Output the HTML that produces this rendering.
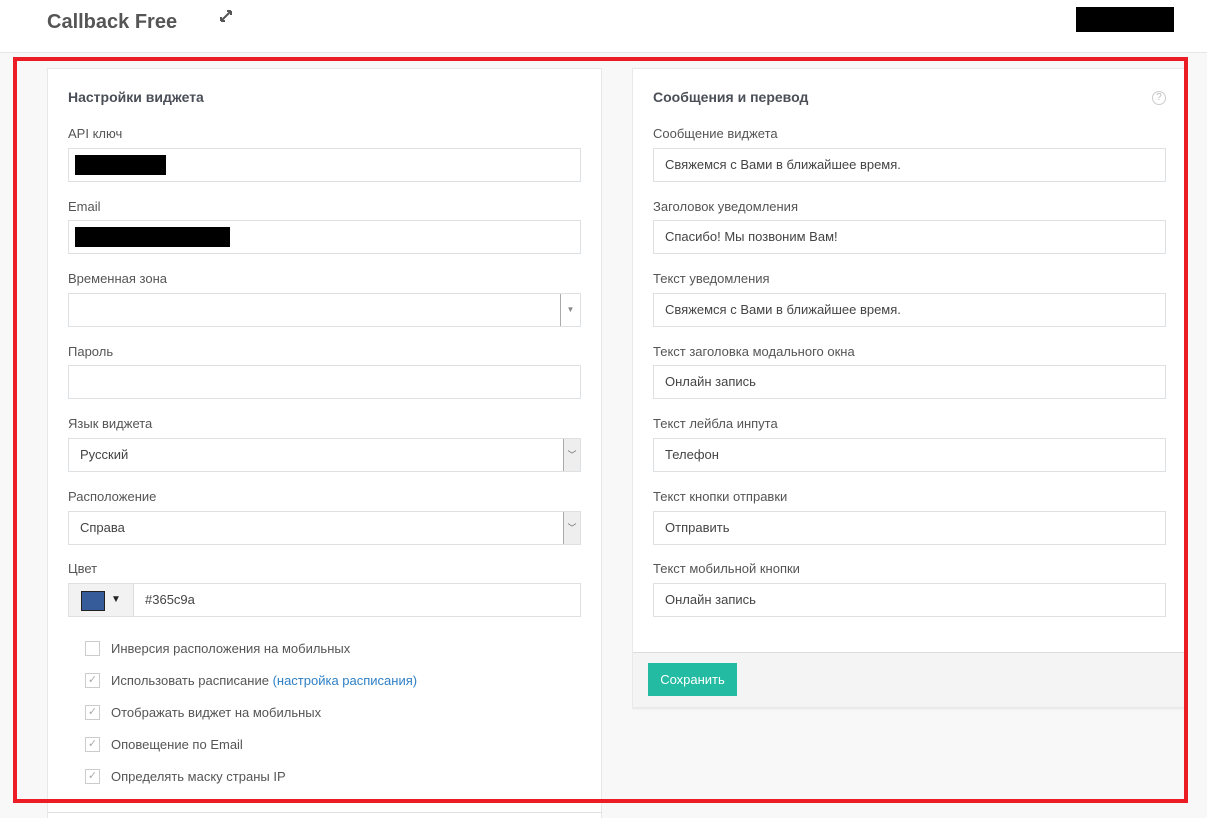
<!DOCTYPE html><html style="overflow:hidden;height:818px"><head><meta charset="utf-8"><style>
*{box-sizing:border-box;margin:0;padding:0}
body{width:1207px;height:818px;overflow:hidden;background:#f8f8f8;font-family:"Liberation Sans",sans-serif;font-size:13px;color:#555;position:relative}
.hdr{position:absolute;left:0;top:0;width:1207px;height:53px;background:#fff;border-bottom:1px solid #e6e6e6}
.abs{position:absolute}
.panel{position:absolute;background:#fff;border:1px solid #e8e8e8}
h3{position:absolute;font-size:14px;font-weight:bold;color:#4a4f57}
.lbl{position:absolute;font-size:13px;color:#555}
.inp{position:absolute;height:34px;border:1px solid #dde1e4;background:#fff;font-size:13px;color:#444;padding:0 0 0 11px;line-height:32px}
.cb{position:absolute;left:85px;width:15px;height:15px;border:1px solid #ccc;background:#fff;font-size:11px;color:#aaa;line-height:13px;text-align:center}
.ct{position:absolute;left:111px;font-size:13px;color:#555}
.sel{position:absolute;right:0;top:0;width:17px;height:32px;border-left:1px solid #aaa;background:#eee;font-size:9px;color:#666;text-align:center;line-height:32px}
</style></head><body>
<div class="hdr"></div>
<div class="abs" style="left:47px;top:11px;font-size:20px;font-weight:bold;color:#555">Callback Free</div>
<svg class="abs" style="left:219px;top:9px" width="14" height="14" viewBox="0 0 14 14"><path d="M2 12L12 2M2 12v-4M2 12h4M12 2v4M12 2h-4" stroke="#555" stroke-width="2" fill="none"/></svg>
<div class="abs" style="left:1076px;top:7px;width:98px;height:25px;background:#000"></div>

<div class="panel" style="left:47px;top:68px;width:555px;height:760px"></div>
<div class="abs" style="left:47px;top:812px;width:555px;height:1px;background:#e0e0e0"></div>
<h3 style="left:68px;top:89px">Настройки виджета</h3>
<div class="lbl" style="left:68px;top:126px">API ключ</div>
<div class="inp" style="left:68px;top:148px;width:513px"><div class="abs" style="left:6px;top:6px;width:91px;height:20px;background:#000"></div></div>
<div class="lbl" style="left:68px;top:199px">Email</div>
<div class="inp" style="left:68px;top:220px;width:513px"><div class="abs" style="left:6px;top:6px;width:155px;height:20px;background:#000"></div></div>
<div class="lbl" style="left:68px;top:271px">Временная зона</div>
<div class="inp" style="left:68px;top:293px;width:513px"><div class="abs" style="right:0;top:0;width:20px;height:32px;border-left:1px solid #aaa;color:#888;font-size:8px;text-align:center;line-height:32px">▼</div></div>
<div class="lbl" style="left:68px;top:344px">Пароль</div>
<div class="inp" style="left:68px;top:365px;width:513px"></div>
<div class="lbl" style="left:68px;top:416px">Язык виджета</div>
<div class="inp" style="left:68px;top:438px;width:513px">Русский<div class="sel">﹀</div></div>
<div class="lbl" style="left:68px;top:489px">Расположение</div>
<div class="inp" style="left:68px;top:511px;width:513px">Справа<div class="sel">﹀</div></div>
<div class="lbl" style="left:68px;top:561px">Цвет</div>
<div class="inp" style="left:68px;top:583px;width:513px;padding-left:76px">#365c9a
<div class="abs" style="left:0;top:0;width:65px;height:32px;background:#f2f2f2;border-right:1px solid #ddd"><div class="abs" style="left:12px;top:7px;width:24px;height:20px;background:#365c9a;border:1px solid #222"></div><div class="abs" style="left:42px;top:0;font-size:10px;color:#222">▼</div></div></div>

<div class="cb" style="top:641px"></div><div class="ct" style="top:641px">Инверсия расположения на мобильных</div>
<div class="cb" style="top:673px">✓</div><div class="ct" style="top:673px">Использовать расписание <span style="color:#2f80c5">(настройка расписания)</span></div>
<div class="cb" style="top:705px">✓</div><div class="ct" style="top:705px">Отображать виджет на мобильных</div>
<div class="cb" style="top:737px">✓</div><div class="ct" style="top:737px">Оповещение по Email</div>
<div class="cb" style="top:769px">✓</div><div class="ct" style="top:769px">Определять маску страны IP</div>

<div class="panel" style="left:632px;top:68px;width:560px;height:640px;box-shadow:0 1px 2px rgba(0,0,0,.08)"></div>
<div class="abs" style="left:633px;top:652px;width:560px;height:55px;background:#f4f4f4;border-top:1px solid #ddd"></div>
<div class="abs" style="left:648px;top:663px;width:89px;height:33px;background:#23bba2;color:#fff;font-size:13px;line-height:33px;text-align:center">Сохранить</div>
<h3 style="left:653px;top:89px">Сообщения и перевод</h3>
<div class="abs" style="left:1152px;top:91px;width:14px;height:14px;border:1px solid #ccc;border-radius:50%;font-size:10px;color:#bbb;text-align:center;line-height:12px">?</div>
<div class="lbl" style="left:653px;top:126px">Сообщение виджета</div>
<div class="inp" style="left:653px;top:148px;width:513px">Свяжемся с Вами в ближайшее время.</div>
<div class="lbl" style="left:653px;top:199px">Заголовок уведомления</div>
<div class="inp" style="left:653px;top:220px;width:513px">Спасибо! Мы позвоним Вам!</div>
<div class="lbl" style="left:653px;top:271px">Текст уведомления</div>
<div class="inp" style="left:653px;top:293px;width:513px">Свяжемся с Вами в ближайшее время.</div>
<div class="lbl" style="left:653px;top:344px">Текст заголовка модального окна</div>
<div class="inp" style="left:653px;top:365px;width:513px">Онлайн запись</div>
<div class="lbl" style="left:653px;top:416px">Текст лейбла инпута</div>
<div class="inp" style="left:653px;top:438px;width:513px">Телефон</div>
<div class="lbl" style="left:653px;top:489px">Текст кнопки отправки</div>
<div class="inp" style="left:653px;top:511px;width:513px">Отправить</div>
<div class="lbl" style="left:653px;top:561px">Текст мобильной кнопки</div>
<div class="inp" style="left:653px;top:583px;width:513px">Онлайн запись</div>

<div class="abs" style="left:1188px;top:57px;width:19px;height:761px;background:#f8f8f8"></div>
<div class="abs" style="left:602px;top:57px;width:30px;height:745px;background:#f8f8f8"></div>
<div class="abs" style="left:13px;top:57px;width:1175px;height:746px;border:4px solid #ec1c24"></div>
</body></html>
